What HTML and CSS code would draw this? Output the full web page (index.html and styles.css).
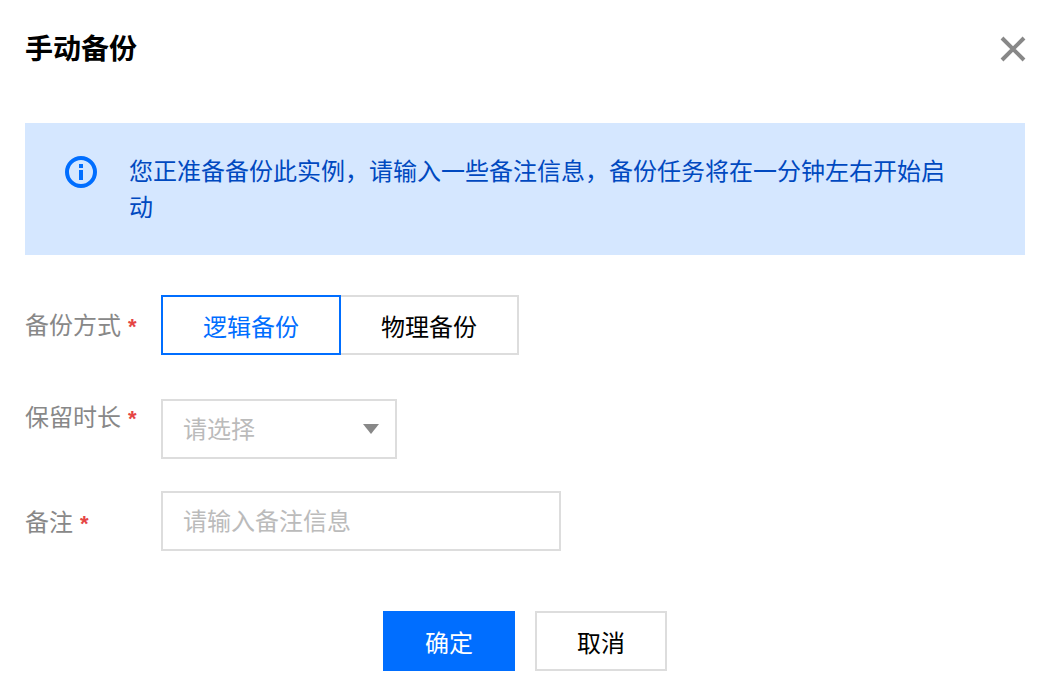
FILE: index.html
```html
<!DOCTYPE html>
<html lang="zh-CN">
<head>
    <meta charset="UTF-8">
    <title>手动备份</title>
    <link rel="stylesheet" href="styles.css">
</head>
<body>
    <div class="dialog">
        <header class="dialog-head">
            <h1>手动备份</h1>
            <button class="close" aria-label="关闭">
                <svg width="26" height="26" viewBox="0 0 26 26"><path d="M2 2 L24 24 M24 2 L2 24" stroke="#888" stroke-width="4" fill="none"/></svg>
            </button>
        </header>

        <div class="alert">
            <svg class="alert-icon" width="32" height="32" viewBox="0 0 32 32">
                <circle cx="16" cy="16" r="14" fill="none" stroke="#006eff" stroke-width="4"/>
                <rect x="14" y="8" width="4" height="4" fill="#006eff"/>
                <rect x="14" y="14" width="4" height="10" fill="#006eff"/>
            </svg>
            <p>您正准备备份此实例，请输入一些备注信息，备份任务将在一分钟左右开始启动</p>
        </div>

        <form class="form">
            <div class="row row-type">
                <label class="label">备份方式<span class="star">*</span></label>
                <div class="segments">
                    <button type="button" class="segment active">逻辑备份</button>
                    <button type="button" class="segment">物理备份</button>
                </div>
            </div>
            <div class="row row-keep">
                <label class="label">保留时长<span class="star">*</span></label>
                <div class="select">
                    <span>请选择</span>
                    <i class="caret"></i>
                </div>
            </div>
            <div class="row row-note">
                <label class="label">备注<span class="star">*</span></label>
                <input class="input" type="text" placeholder="请输入备注信息">
            </div>
        </form>

        <footer class="actions">
            <button class="btn primary">确定</button>
            <button class="btn">取消</button>
        </footer>
    </div>
</body>
</html>
```

FILE: styles.css
```css
* {
    box-sizing: border-box;
    font-family: "Liberation Sans", "Noto Sans CJK SC", sans-serif;
}

html, body {
    margin: 0;
    height: 100%;
    background: #fff;
}

.dialog {
    padding: 0 20px 0 25px;
    overflow: hidden;
}

.dialog-head {
    display: flex;
    justify-content: space-between;
    align-items: center;
    height: 98px;
}

.dialog-head h1 {
    margin: 2px 0 0;
    font-size: 28px;
    font-weight: 700;
    line-height: 40px;
    color: #000;
}

.close {
    display: block;
    width: 26px;
    height: 26px;
    padding: 0;
    border: none;
    background: none;
}

.alert {
    display: flex;
    width: 1000px;
    height: 132px;
    margin-top: 25px;
    padding: 31px 80px 0 40px;
    background: #d5e7ff;
}

.alert-icon {
    flex: none;
    margin-top: 2px;
    margin-right: 32px;
}

.alert p {
    margin: 0;
    font-size: 24px;
    line-height: 36px;
    color: #0049c0;
}

.form {
    margin-top: 40px;
}

.row {
    display: flex;
    margin-bottom: 32px;
}

.row-type {
    margin-bottom: 44px;
}

.label {
    flex: none;
    width: 136px;
    font-size: 24px;
    line-height: 36px;
    color: #888;
}

.row-type .label {
    padding-top: 13px;
}

.row-keep .label {
    padding-top: 1px;
}

.row-note .label {
    padding-top: 14px;
}

.star {
    margin-left: 7px;
    font-size: 22px;
    font-weight: 700;
    color: #e54545;
}

.segments {
    display: flex;
}

.segment {
    height: 60px;
    width: 178px;
    padding: 0;
    border: 2px solid #ddd;
    border-left: none;
    background: #fff;
    font-size: 24px;
    color: #000;
}

.segment.active {
    width: 180px;
    border: 2px solid #006eff;
    color: #006eff;
}

.select {
    display: flex;
    justify-content: space-between;
    align-items: center;
    width: 236px;
    height: 60px;
    padding: 0 16px 4px 20px;
    border: 2px solid #ddd;
    font-size: 24px;
    color: #bbb;
}

.caret {
    width: 0;
    height: 0;
    margin-top: 4px;
    border-left: 8px solid transparent;
    border-right: 8px solid transparent;
    border-top: 10px solid #888;
}

.input {
    width: 400px;
    height: 60px;
    padding: 2px 20px 0;
    border: 2px solid #ddd;
    outline: none;
    font-size: 24px;
}

.input::placeholder {
    color: #bbb;
}

.actions {
    display: flex;
    justify-content: center;
    gap: 20px;
    margin-top: 60px;
    padding-right: 1px;
}

.btn {
    width: 132px;
    height: 60px;
    padding: 0;
    border: 2px solid #ddd;
    background: #fff;
    font-size: 24px;
    color: #000;
}

.btn.primary {
    border: none;
    background: #006eff;
    color: #fff;
}
```
